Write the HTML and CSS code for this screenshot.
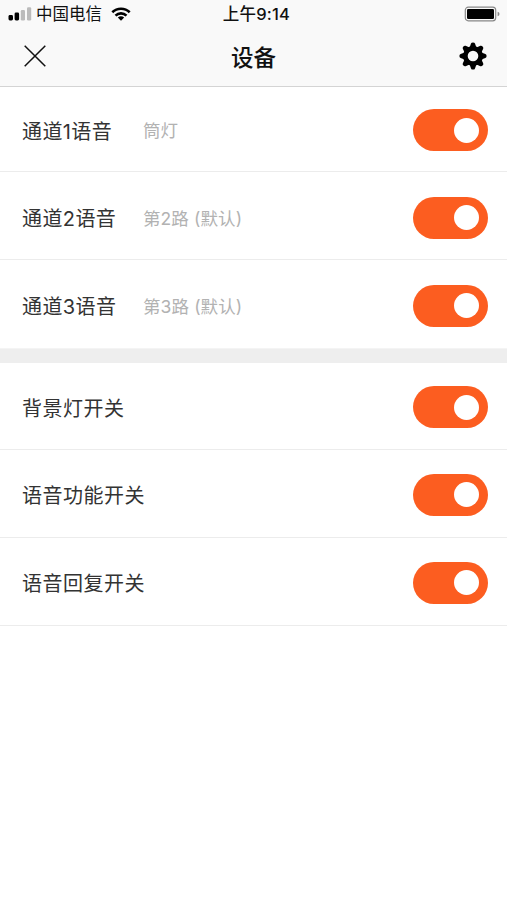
FILE: index.html
```
<!DOCTYPE html>
<html lang="zh-CN">
<head>
  <meta charset="UTF-8">
  <title>设备</title>
  <link rel="stylesheet" href="styles.css">
</head>
<body>
  <header class="header">
    <!-- 状态栏 -->
    <div class="status">
      <div class="carrier">
        <svg class="signal" width="24" height="14" viewBox="0 0 24 14">
          <rect x="0.5" y="8" width="4.5" height="5.5" rx="1.4" />
          <rect x="6.6" y="5.5" width="4.5" height="8" rx="1.4" />
          <rect class="weak" x="12.8" y="3" width="4.2" height="10.5" rx="1.2" />
          <rect class="weak" x="19" y="0.3" width="4.2" height="13.2" rx="1.2" />
        </svg>
        <span class="carrier-name">中国电信</span>
        <svg class="wifi" width="20" height="14" viewBox="0 0 20 14">
          <path d="M1.3 5.2 A12.5 12.5 0 0 1 18.7 5.2" />
          <path d="M4.5 8.6 A7.8 7.8 0 0 1 15.5 8.6" />
          <path class="dot" d="M6.8 10.4 Q10 8 13.2 10.4 L10 13.7 Z" />
        </svg>
      </div>
      <div class="time">上午9:14</div>
      <svg class="battery" width="37" height="16" viewBox="0 0 37 16">
        <rect class="case" x="1.3" y="1.2" width="30.4" height="13.6" rx="3" />
        <rect x="3" y="3" width="27" height="10" rx="1.3" />
        <path class="cap" d="M33.6 5.8 Q35.5 6.3 35.5 8 Q35.5 9.7 33.6 10.2 Z" />
      </svg>
    </div>
    <!-- 导航栏 -->
    <div class="nav">
      <svg class="close" width="22" height="22" viewBox="0 0 22 22">
        <path d="M0.7 0.7 L21.3 21.3 M21.3 0.7 L0.7 21.3" />
      </svg>
      <h1 class="title">设备</h1>
      <svg class="gear" width="28" height="28" viewBox="-14 -14 28 28">
        <g id="teeth">
          <path d="M-3.2 -9 L-2 -12.4 Q-1.6 -13.6 0 -13.6 Q1.6 -13.6 2 -12.4 L3.2 -9 L3.2 9 L2 12.4 Q1.6 13.6 0 13.6 Q-1.6 13.6 -2 12.4 L-3.2 9 Z" />
        </g>
        <use href="#teeth" transform="rotate(45)" />
        <use href="#teeth" transform="rotate(90)" />
        <use href="#teeth" transform="rotate(135)" />
        <circle r="10" />
        <circle class="hole" r="5.3" />
      </svg>
    </div>
  </header>

  <main>
    <!-- 通道 -->
    <section class="group channels">
      <div class="row">
        <span class="label">通道1语音</span>
        <span class="note">筒灯</span>
        <span class="switch"></span>
      </div>
      <div class="row">
        <span class="label">通道2语音</span>
        <span class="note">第2路 (默认)</span>
        <span class="switch"></span>
      </div>
      <div class="row">
        <span class="label">通道3语音</span>
        <span class="note">第3路 (默认)</span>
        <span class="switch"></span>
      </div>
    </section>

    <!-- 功能开关 -->
    <section class="group features">
      <div class="row">
        <span class="label">背景灯开关</span>
        <span class="switch"></span>
      </div>
      <div class="row">
        <span class="label">语音功能开关</span>
        <span class="switch"></span>
      </div>
      <div class="row">
        <span class="label">语音回复开关</span>
        <span class="switch"></span>
      </div>
    </section>
  </main>
</body>
</html>
```
FILE: styles.css
```
* { box-sizing: border-box; }
body { margin: 0; min-height: 100vh; background: #fff; color: #333; font-family: Inter, "Noto Sans CJK SC", sans-serif; }
svg { display: block; }

/* 顶部 */
.header { height: 87px; background: #f9f9f9; border-bottom: 1px solid #d4d4d4; color: #111; }
.status { display: grid; grid-template-columns: 1fr auto 1fr; align-items: center; height: 27px; padding: 0 2px 0 8px; font-size: 16px; line-height: 27px; }
.carrier { display: flex; align-items: center; }
.carrier-name { margin: 0 9px 0 4px; padding-top: 1px; font-size: 16.5px; }
.weak { fill: #bbb; }
.wifi path { fill: none; stroke: #000; stroke-width: 2.6; }
.wifi .dot { fill: #000; stroke: none; }
.time { padding-top: 1px; font-weight: 500; font-size: 16.5px; letter-spacing: 0.2px; }
.battery { justify-self: end; margin-right: 4px; }
.battery .case { fill: none; stroke: #888; stroke-width: 1.2; }
.battery .cap { fill: #888; }

.nav { display: grid; grid-template-columns: 1fr auto 1fr; align-items: center; height: 58px; padding: 0 20px 0 24px; }
.close path { fill: none; stroke: #111; stroke-width: 1.5; }
.title { margin: 0; padding: 3px 4px 0 0; font-size: 22.5px; font-weight: 500; line-height: 30px; }
.gear { justify-self: end; }
.hole { fill: #f9f9f9; }

/* 列表 */
.row { display: flex; align-items: center; height: 88px; padding: 4px 19px 0 22px; border-bottom: 1px solid #ececec; }
.row:first-child { height: 85px; padding-top: 2px; }
.channels .row:last-child { height: 89px; padding-top: 3px; border-color: #f4f4f4; }
.features { border-top: 14px solid #eee; }
.features .row { padding-top: 2px; }
.features .row:first-child { height: 87px; }
.label { width: 121px; font-size: 20px; letter-spacing: 0.4px; white-space: nowrap; }
.features .label { width: auto; letter-spacing: 0.5px; }
.note { margin-top: -1px; color: #b2b2b2; font-size: 17.5px; letter-spacing: 0.1px; white-space: nowrap; }

/* 开关 */
.switch { display: flex; align-items: center; justify-content: flex-end; width: 75px; height: 42px; margin-left: auto; padding-right: 9px; border-radius: 21px; background: #fc5d20; }
.switch::after { content: ""; width: 25px; height: 25px; border-radius: 50%; background: #fff; }
```
